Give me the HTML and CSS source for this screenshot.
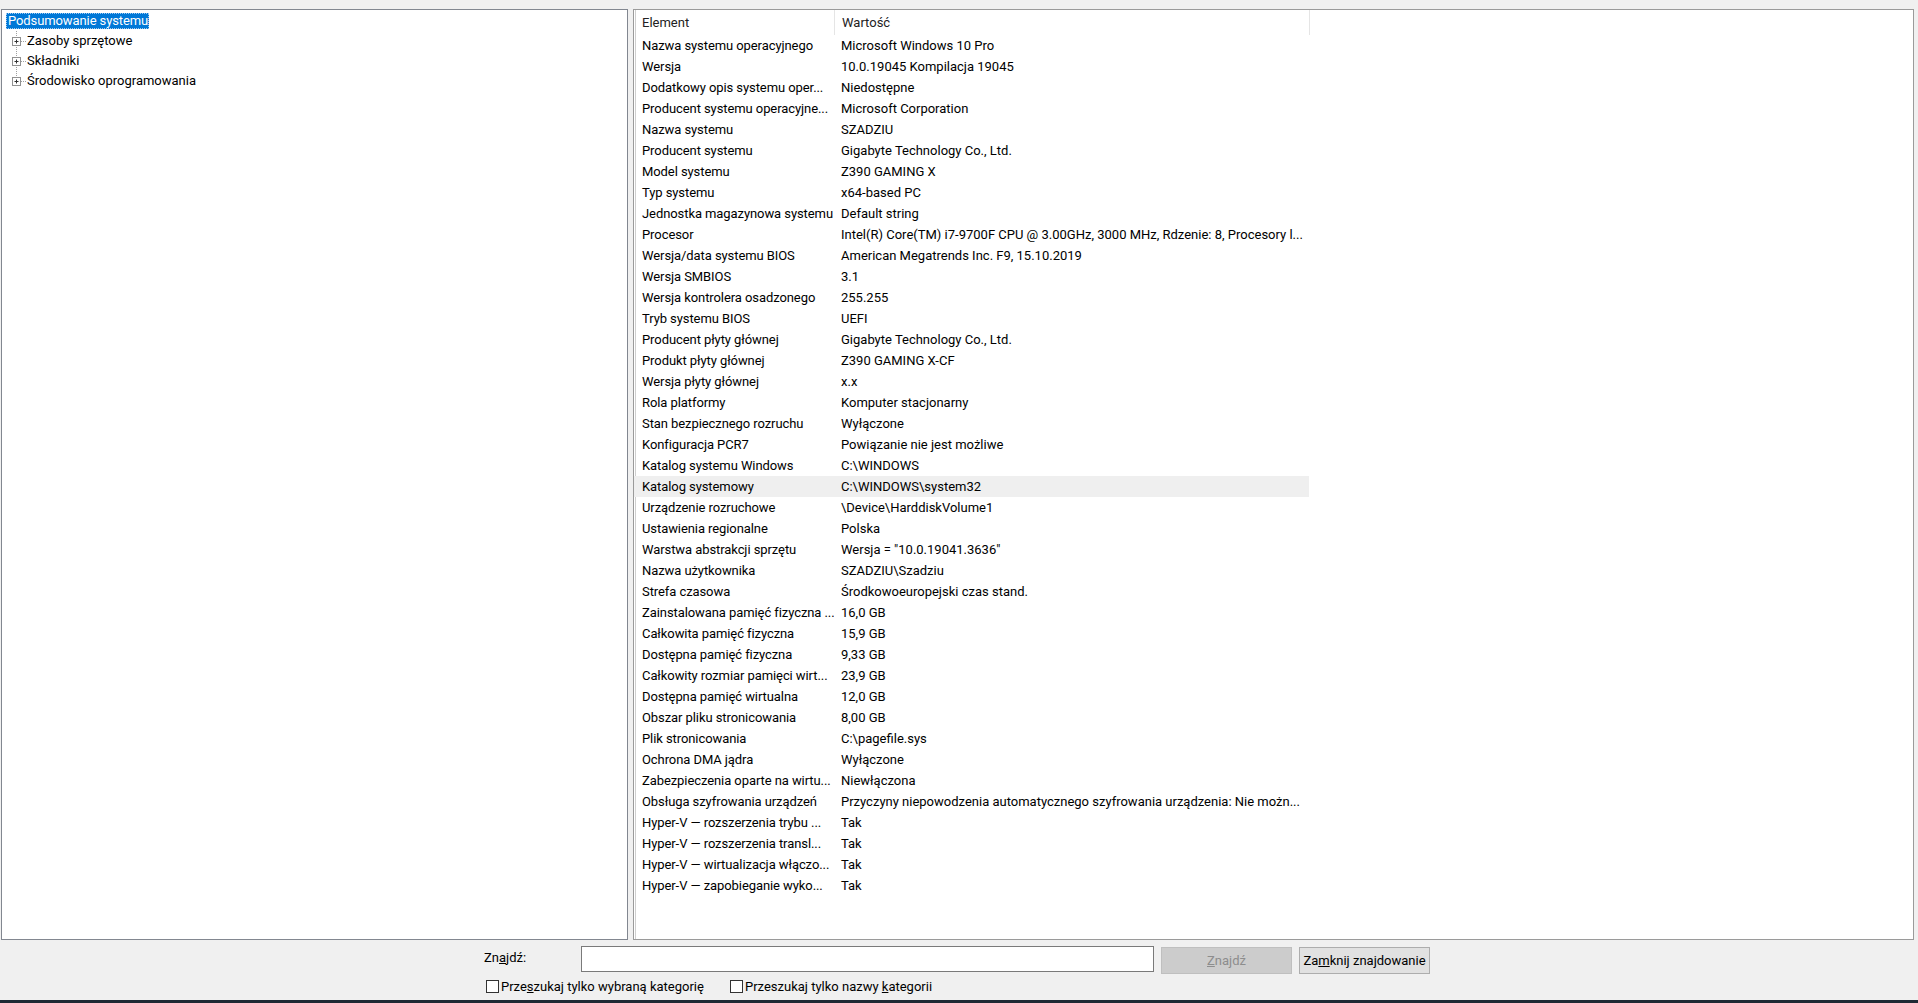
FILE: index.html
```html
<!DOCTYPE html>
<html lang="pl">
<head>
    <meta charset="UTF-8">
    <title>Informacje o systemie</title>
    <link rel="stylesheet" href="styles.css">
</head>
<body>
    <div class="window">
        <div class="menubar"></div>

        <div class="panes">
            <div class="tree-pane">
                <div class="tree-row root">
                    <span class="tree-label selected">Podsumowanie systemu</span>
                </div>
                <div class="tree-row child">
                    <svg class="expander" width="21" height="20" viewBox="0 0 21 20">
                        <line x1="10.5" y1="0" x2="10.5" y2="20" class="dots"/>
                        <line x1="15" y1="10.5" x2="21" y2="10.5" class="dots"/>
                        <rect x="6.5" y="6.5" width="8" height="8" class="box"/>
                        <line x1="8.5" y1="10.5" x2="12.5" y2="10.5" class="plus"/>
                        <line x1="10.5" y1="8.5" x2="10.5" y2="12.5" class="plus"/>
                    </svg>
                    <span class="tree-label">Zasoby sprzętowe</span>
                </div>
                <div class="tree-row child">
                    <svg class="expander" width="21" height="20" viewBox="0 0 21 20">
                        <line x1="10.5" y1="0" x2="10.5" y2="20" class="dots"/>
                        <line x1="15" y1="10.5" x2="21" y2="10.5" class="dots"/>
                        <rect x="6.5" y="6.5" width="8" height="8" class="box"/>
                        <line x1="8.5" y1="10.5" x2="12.5" y2="10.5" class="plus"/>
                        <line x1="10.5" y1="8.5" x2="10.5" y2="12.5" class="plus"/>
                    </svg>
                    <span class="tree-label">Składniki</span>
                </div>
                <div class="tree-row child">
                    <svg class="expander" width="21" height="20" viewBox="0 0 21 20">
                        <line x1="10.5" y1="0" x2="10.5" y2="7" class="dots"/>
                        <line x1="15" y1="10.5" x2="21" y2="10.5" class="dots"/>
                        <rect x="6.5" y="6.5" width="8" height="8" class="box"/>
                        <line x1="8.5" y1="10.5" x2="12.5" y2="10.5" class="plus"/>
                        <line x1="10.5" y1="8.5" x2="10.5" y2="12.5" class="plus"/>
                    </svg>
                    <span class="tree-label">Środowisko oprogramowania</span>
                </div>
            </div>

            <div class="list-pane">
                <div class="list-header">
                    <div class="hcell">Element</div>
                    <div class="hcell">Wartość</div>
                    <div class="hcell filler"></div>
                </div>
                <div class="row"><div>Nazwa systemu operacyjnego</div><div>Microsoft Windows 10 Pro</div></div>
                <div class="row"><div>Wersja</div><div>10.0.19045 Kompilacja 19045</div></div>
                <div class="row"><div>Dodatkowy opis systemu oper...</div><div>Niedostępne</div></div>
                <div class="row"><div>Producent systemu operacyjne...</div><div>Microsoft Corporation</div></div>
                <div class="row"><div>Nazwa systemu</div><div>SZADZIU</div></div>
                <div class="row"><div>Producent systemu</div><div>Gigabyte Technology Co., Ltd.</div></div>
                <div class="row"><div>Model systemu</div><div>Z390 GAMING X</div></div>
                <div class="row"><div>Typ systemu</div><div>x64-based PC</div></div>
                <div class="row"><div>Jednostka magazynowa systemu</div><div>Default string</div></div>
                <div class="row"><div>Procesor</div><div>Intel(R) Core(TM) i7-9700F CPU @ 3.00GHz, 3000 MHz, Rdzenie: 8, Procesory l...</div></div>
                <div class="row"><div>Wersja/data systemu BIOS</div><div>American Megatrends Inc. F9, 15.10.2019</div></div>
                <div class="row"><div>Wersja SMBIOS</div><div>3.1</div></div>
                <div class="row"><div>Wersja kontrolera osadzonego</div><div>255.255</div></div>
                <div class="row"><div>Tryb systemu BIOS</div><div>UEFI</div></div>
                <div class="row"><div>Producent płyty głównej</div><div>Gigabyte Technology Co., Ltd.</div></div>
                <div class="row"><div>Produkt płyty głównej</div><div>Z390 GAMING X-CF</div></div>
                <div class="row"><div>Wersja płyty głównej</div><div>x.x</div></div>
                <div class="row"><div>Rola platformy</div><div>Komputer stacjonarny</div></div>
                <div class="row"><div>Stan bezpiecznego rozruchu</div><div>Wyłączone</div></div>
                <div class="row"><div>Konfiguracja PCR7</div><div>Powiązanie nie jest możliwe</div></div>
                <div class="row"><div>Katalog systemu Windows</div><div>C:\WINDOWS</div></div>
                <div class="row hover"><div>Katalog systemowy</div><div>C:\WINDOWS\system32</div></div>
                <div class="row"><div>Urządzenie rozruchowe</div><div>\Device\HarddiskVolume1</div></div>
                <div class="row"><div>Ustawienia regionalne</div><div>Polska</div></div>
                <div class="row"><div>Warstwa abstrakcji sprzętu</div><div>Wersja = "10.0.19041.3636"</div></div>
                <div class="row"><div>Nazwa użytkownika</div><div>SZADZIU\Szadziu</div></div>
                <div class="row"><div>Strefa czasowa</div><div>Środkowoeuropejski czas stand.</div></div>
                <div class="row"><div>Zainstalowana pamięć fizyczna ...</div><div>16,0 GB</div></div>
                <div class="row"><div>Całkowita pamięć fizyczna</div><div>15,9 GB</div></div>
                <div class="row"><div>Dostępna pamięć fizyczna</div><div>9,33 GB</div></div>
                <div class="row"><div>Całkowity rozmiar pamięci wirt...</div><div>23,9 GB</div></div>
                <div class="row"><div>Dostępna pamięć wirtualna</div><div>12,0 GB</div></div>
                <div class="row"><div>Obszar pliku stronicowania</div><div>8,00 GB</div></div>
                <div class="row"><div>Plik stronicowania</div><div>C:\pagefile.sys</div></div>
                <div class="row"><div>Ochrona DMA jądra</div><div>Wyłączone</div></div>
                <div class="row"><div>Zabezpieczenia oparte na wirtu...</div><div>Niewłączona</div></div>
                <div class="row"><div>Obsługa szyfrowania urządzeń</div><div>Przyczyny niepowodzenia automatycznego szyfrowania urządzenia: Nie możn...</div></div>
                <div class="row"><div>Hyper-V — rozszerzenia trybu ...</div><div>Tak</div></div>
                <div class="row"><div>Hyper-V — rozszerzenia transl...</div><div>Tak</div></div>
                <div class="row"><div>Hyper-V — wirtualizacja włączo...</div><div>Tak</div></div>
                <div class="row"><div>Hyper-V — zapobieganie wyko...</div><div>Tak</div></div>
            </div>
        </div>

        <div class="findbar">
            <div class="find-row">
                <label class="find-label" for="find">Zn<u>a</u>jdź:</label>
                <input class="find-input" id="find" type="text">
                <button class="btn" disabled><u>Z</u>najdź</button>
                <button class="btn">Za<u>m</u>knij znajdowanie</button>
            </div>
            <div class="check-row">
                <label class="check first"><span class="checkbox"></span><span>Prze<u>s</u>zukaj tylko wybraną kategorię</span></label>
                <label class="check"><span class="checkbox"></span><span>Przeszukaj tylko nazwy <u>k</u>ategorii</span></label>
            </div>
        </div>

        <div class="taskbar"></div>
    </div>
</body>
</html>
```

FILE: styles.css
```css
body {
    margin: 0;
    background: #f0f0f0;
    color: #000;
    font-family: Roboto, "Noto Sans", sans-serif;
    font-size: 13px;
}

.window {
    display: flex;
    flex-direction: column;
    height: 1003px;
    overflow: hidden;
}

.menubar {
    height: 9px;
    flex: none;
}

/* the two panes */
.panes {
    display: flex;
    height: 931px;
    flex: none;
}

.tree-pane {
    width: 625px;
    margin-left: 1px;
    background: #fff;
    border: 1px solid #828790;
}

.tree-row {
    display: flex;
    align-items: center;
    height: 20px;
    padding-left: 4px;
}

.tree-row.root {
    height: 21px;
}

.tree-label {
    line-height: 16px;
    white-space: nowrap;
}

.tree-label.selected {
    padding: 0 1px 0 2px;
    background: #0078d7;
    color: #fff;
    letter-spacing: -0.1px;
    outline: 1px dotted #9fcaf0;
    outline-offset: -1px;
}

.expander {
    flex: none;
}

.expander .dots {
    stroke: #a0a0a0;
    stroke-width: 1;
    stroke-dasharray: 1 1;
}

.expander .box {
    fill: #fff;
    stroke: #919191;
    stroke-width: 1;
}

.expander .plus {
    stroke: #333;
    stroke-width: 1;
}

.list-pane {
    width: 1279px;
    margin-left: 5px;
    background: #fff;
    border: 1px solid #9a9a9a;
    box-shadow: inset 1px 0 0 #fff, inset 2px 0 0 #cfcfcf;
}

.list-header {
    display: grid;
    grid-template-columns: 200px 475px 1fr;
    height: 25px;
}

.hcell {
    display: flex;
    align-items: center;
    padding-left: 7px;
    color: #222;
    border-left: 1px solid #e5e5e5;
}

.hcell:first-child {
    border-left: none;
    padding-left: 8px;
}

.row {
    display: grid;
    grid-template-columns: 200px 475px;
    width: 675px;
    height: 21px;
    line-height: 21px;
    white-space: nowrap;
}

.row div {
    overflow: hidden;
    padding-left: 7px;
}

.row div:first-child {
    padding-left: 8px;
    letter-spacing: -0.08px;
}

.row.hover {
    background: #efefef;
}

/* find bar at the bottom */
.findbar {
    height: 60px;
    flex: none;
    padding-top: 5px;
    box-sizing: border-box;
}

.find-row {
    display: flex;
    align-items: center;
    height: 28px;
    padding-left: 484px;
}

.find-label {
    width: 97px;
    margin-top: -3px;
}

.find-input {
    width: 573px;
    height: 26px;
    box-sizing: border-box;
    border: 1px solid #7a7a7a;
    margin: 0 0 1px;
    background: #fff;
}

.btn {
    width: 131px;
    height: 27px;
    margin: 2px 0 0 7px;
    font-family: inherit;
    font-size: 13px;
    background: #e1e1e1;
    border: 1px solid #adadad;
    color: #000;
    padding: 0;
}

.btn:disabled {
    background: #cccccc;
    border-color: #bfbfbf;
    color: #8d8d8d;
}

.check-row {
    display: flex;
    align-items: center;
    height: 18px;
    margin-top: 4px;
    padding-left: 486px;
}

.check {
    display: flex;
    align-items: center;
    gap: 1px;
}

.check.first {
    width: 244px;
}

.checkbox {
    width: 11px;
    height: 11px;
    border: 1px solid #333;
    background: #fff;
    margin-right: 1px;
}

.taskbar {
    height: 3px;
    flex: none;
    background: #1e2833;
}
```
